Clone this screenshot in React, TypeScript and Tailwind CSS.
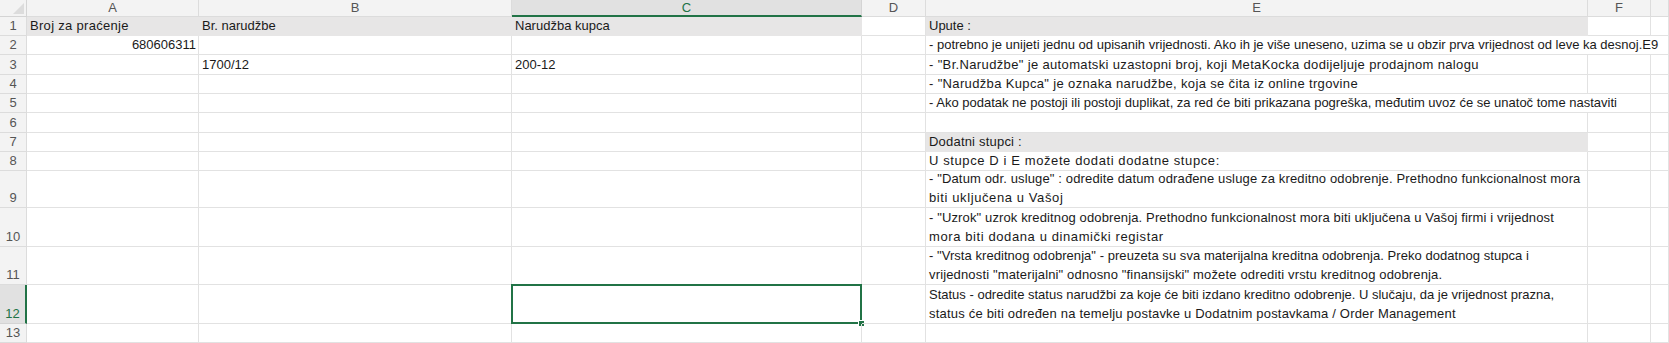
import React from 'react'

type Cell = { t?: React.ReactNode; span?: number; fill?: boolean; right?: boolean; sel?: boolean; cls?: string }

const letters = ['A', 'B', 'C', 'D', 'E', 'F', '']

const two = (a: string, b: string, ca = '', cb = '') => (
  <>
    <span className={`block whitespace-nowrap ${ca}`}>{a}</span>
    <span className={`block whitespace-nowrap ${cb}`}>{b}</span>
  </>
)

const rows: Cell[][] = [
  [{ t: 'Broj za praćenje', fill: true, cls: 'tracking-[0.3px]' }, { t: 'Br. narudžbe', fill: true }, { t: 'Narudžba kupca', fill: true }, {}, { t: 'Upute :', fill: true }, {}, {}],
  [{ t: '680606311', right: true }, {}, {}, {}, { t: '- potrebno je unijeti jednu od upisanih vrijednosti. Ako ih je više uneseno, uzima se u obzir prva vrijednost od leve ka desnoj.E9', span: 3 }],
  [{}, { t: '1700/12' }, { t: '200-12' }, {}, { t: '- "Br.Narudžbe" je automatski uzastopni broj, koji MetaKocka dodijeljuje prodajnom nalogu', cls: 'tracking-[0.35px]' }, {}, {}],
  [{}, {}, {}, {}, { t: '- "Narudžba Kupca" je oznaka narudžbe, koja se čita iz online trgovine', cls: 'tracking-[0.35px]' }, {}, {}],
  [{}, {}, {}, {}, { t: '- Ako podatak ne postoji ili postoji duplikat, za red će biti prikazana pogreška, međutim uvoz će se unatoč tome nastaviti', span: 2 }, {}],
  [{}, {}, {}, {}, {}, {}, {}],
  [{}, {}, {}, {}, { t: 'Dodatni stupci :', fill: true, cls: 'tracking-[0.2px]' }, {}, {}],
  [{}, {}, {}, {}, { t: 'U stupce D i E možete dodati dodatne stupce:', cls: 'tracking-[0.6px]' }, {}, {}],
  [{}, {}, {}, {}, { t: two('- "Datum odr. usluge" : odredite datum odrađene usluge za kreditno odobrenje. Prethodno funkcionalnost mora', 'biti uključena u Vašoj', 'tracking-[0.14px]', 'tracking-[0.6px]') }, {}, {}],
  [{}, {}, {}, {}, { t: two('- "Uzrok" uzrok kreditnog odobrenja. Prethodno funkcionalnost mora biti uključena u Vašoj firmi i vrijednost', 'mora biti dodana u dinamički registar', 'tracking-[0.13px]', 'tracking-[0.6px]') }, {}, {}],
  [{}, {}, {}, {}, { t: two('- "Vrsta kreditnog odobrenja" - preuzeta su sva materijalna kreditna odobrenja. Preko dodatnog stupca i', 'vrijednosti "materijalni" odnosno "finansijski" možete odrediti vrstu kreditnog odobrenja.', 'tracking-[0.05px]', 'tracking-[0.15px]') }, {}, {}],
  [{}, {}, { sel: true }, {}, { t: two('Status - odredite status narudžbi za koje će biti izdano kreditno odobrenje. U slučaju, da je vrijednost prazna,', 'status će biti određen na temelju postavke u Dodatnim postavkama / Order Management', '', 'tracking-[0.2px]') }, {}, {}],
  [{}, {}, {}, {}, {}, {}, {}],
]

const App: React.FC = () => (
  <div className="w-[1669px] h-[343px] overflow-hidden bg-white text-[13px] leading-[19px] text-[#1a1a1a] font-['Liberation_Sans',Arial,sans-serif]">
    <div className="grid grid-cols-[27px_172px_313px_350px_64px_662px_63px_18px] grid-rows-[17px_19px_19px_20px_19px_19px_20px_19px_19px_37px_39px_38px_39px_19px]">
      {/* corner */}
      <div className="relative bg-[#f3f3f3] border-r border-b border-[#d4d4d4]">
        <div className="absolute right-[2px] bottom-[2px] w-0 h-0 border-l-[11px] border-l-transparent border-b-[11px] border-b-[#dcdcdc]" />
      </div>
      {letters.map((l, i) =>
        l === 'C' ? (
          <div key={i} className="bg-[#e1e1e1] border-r border-[#d4d4d4] border-b-2 border-b-[#217346] text-center leading-[16px] text-[#217346]">{l}</div>
        ) : (
          <div key={i} className="bg-[#f3f3f3] border-r border-b border-[#dcdcdc] text-center leading-[16px] text-[#555]">{l}</div>
        )
      )}
      {rows.map((r, i) => (
        <React.Fragment key={i}>
          {i === 11 ? (
            <div className="flex items-end justify-center bg-[#e1e1e1] border-r-2 border-r-[#217346] border-b border-[#d4d4d4] text-[#217346]">{i + 1}</div>
          ) : (
            <div className="flex items-end justify-center bg-[#f3f3f3] border-r border-b border-[#dcdcdc] text-[#555]">{i + 1}</div>
          )}
          {r.map((c, j) => (
            <div
              key={j}
              style={c.span ? { gridColumn: `span ${c.span}` } : undefined}
              className={[
                'relative flex flex-col justify-end px-[3px] border-r border-b',
                c.fill ? 'bg-[#e7e6e6] border-[#e7e6e6]' : 'border-[#e2e2e2]',
                c.right ? 'items-end pr-[2px]' : '',
                c.span ? 'whitespace-nowrap' : '',
              ].join(' ')}
            >
              {typeof c.t === 'string' ? <span className={`whitespace-nowrap ${c.cls ?? ''}`}>{c.t}</span> : c.t}
              {c.sel && (
                <>
                  <div className="absolute -left-px -top-px -right-px -bottom-px border-2 border-[#217346]" />
                  <div className="absolute -right-[4px] -bottom-[4px] w-[7px] h-[7px] bg-[#217346] border border-white" />
                </>
              )}
            </div>
          ))}
        </React.Fragment>
      ))}
    </div>
  </div>
)

export default App
